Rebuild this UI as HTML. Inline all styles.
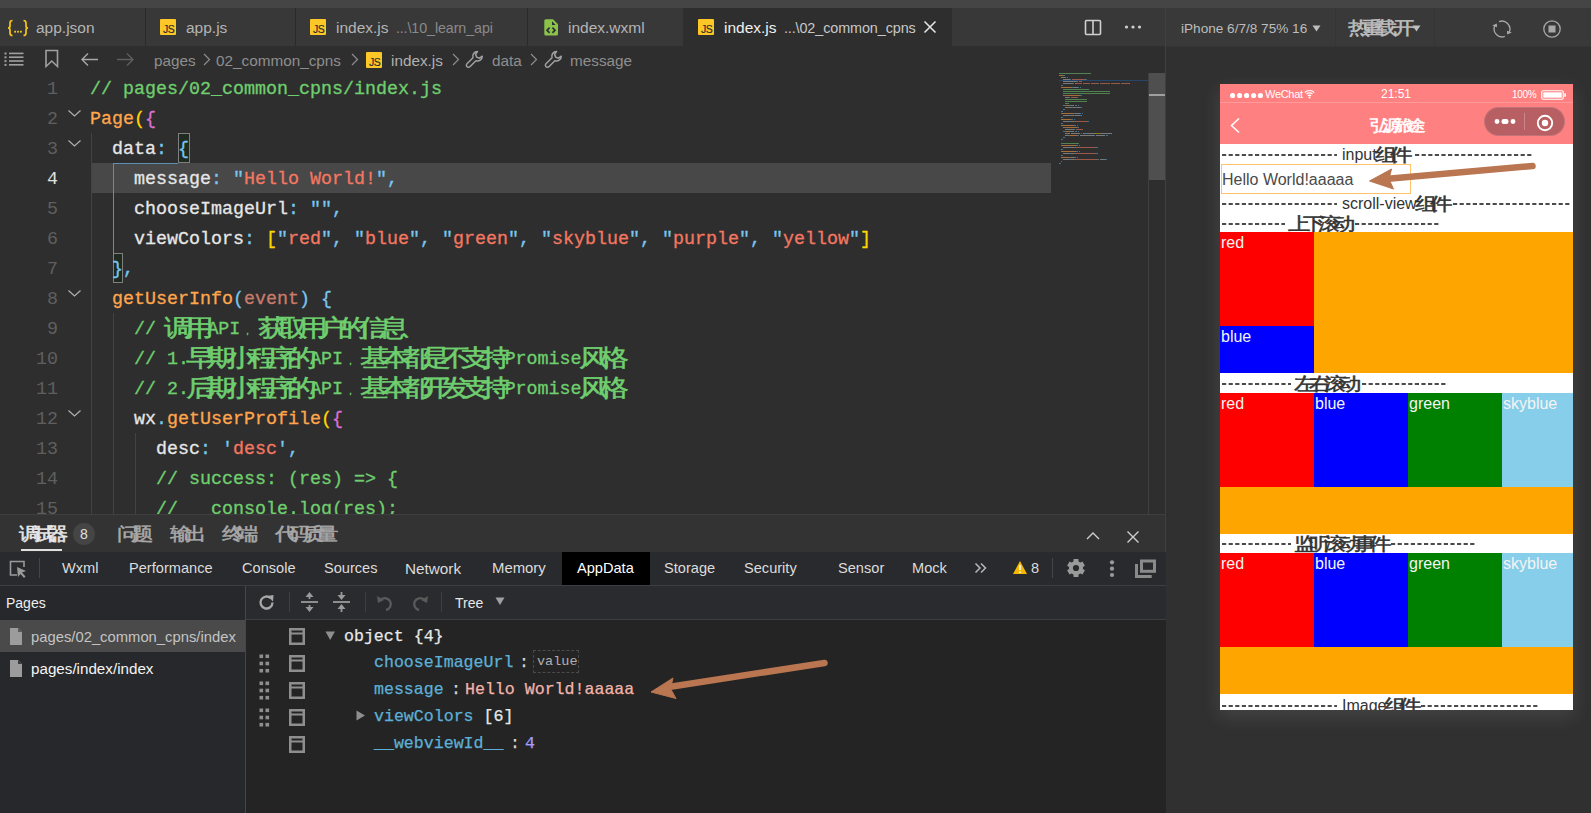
<!DOCTYPE html>
<html><head><meta charset="utf-8">
<style>
*{box-sizing:border-box;margin:0;padding:0}
html,body{width:1591px;height:813px;overflow:hidden;background:#2e2e2e;font-family:"Liberation Sans",sans-serif;}
.a{position:absolute;white-space:pre}
#top{left:0;top:0;width:1591px;height:8px;background:#454545}
#tabs{left:0;top:8px;width:1165px;height:38px;background:#383838}
.sep{position:absolute;width:1px;background:#2a2a2a}
.tab{position:absolute;top:1px;height:38px;font-size:15.5px;color:#b4b4b4;line-height:38px}
.js{position:absolute;width:15.5px;height:15.5px;background:#fdc728;border-radius:1px}
.js:after{content:"JS";position:absolute;right:1.2px;bottom:0.5px;font-size:10.5px;color:#2a2a2a;line-height:10px;letter-spacing:-0.5px;-webkit-text-stroke:0.15px #2a2a2a}
#bc{left:0;top:46px;width:1165px;height:27px;background:#2e2e2e}
.bct{position:absolute;top:1px;font-size:15.3px;color:#8e8e8e;line-height:28px}
#editor{left:0;top:73px;width:1165px;height:441px;background:#2e2e2e;overflow:hidden}
.ln{position:absolute;left:0;padding-top:1.5px;width:58px;text-align:right;font-family:"Liberation Mono",monospace;font-size:18.33px;color:#5f5f5f;line-height:30px}
.cl{position:absolute;left:90px;padding-top:1.5px;-webkit-text-stroke:0.3px;font-family:"Liberation Mono",monospace;font-size:18.33px;line-height:30px;color:#e6e6e6;white-space:pre}
.cm{color:#6fcf6f}.fn{color:#ffa64d}.yb{color:#ffd700}.mg{color:#da70d6}.bl{color:#79c6f0}.st{color:#f47762}.ev{color:#c97b6a}
.guide{position:absolute;width:1px;background:#434343}
.pt{top:515px;height:37px;line-height:37px;font-size:14px;color:#a8a8a8}
.dt{top:552px;height:33px;line-height:33px;font-size:14.6px;color:#dcdcdc}
.tr{font-family:"Liberation Mono",monospace;font-size:16.6px;line-height:26px;padding-top:1.5px;-webkit-text-stroke:0.25px}
.pl{font-size:16px;color:#333;line-height:22px}
.pc{font-size:16px;color:#f4f4f4;line-height:20px;margin-top:-1px}
.k{display:inline-block;font-style:normal;font-family:"Liberation Sans",sans-serif;text-align:center;line-height:0;-webkit-text-stroke:.45px;transform:scaleX(1.25)}
.kc{font-size:9px;text-align:left;-webkit-text-stroke:.3px;transform:none}
.fold{position:absolute;left:68px;width:12px;height:8px}
</style></head>
<body>
<div class="a" id="top"></div>
<div class="a" id="tabs">
  <div class="sep" style="left:145px;top:0;height:38px"></div>
  <div class="sep" style="left:295px;top:0;height:38px"></div>
  <div class="sep" style="left:527px;top:0;height:38px"></div>
  <svg class="a" style="left:7px;top:11px" width="22" height="18" viewBox="0 0 22 18"><g fill="none" stroke="#f5c518" stroke-width="1.7"><path d="M5.5 1.5 Q3 1.5 3 4 V7 Q3 9 1 9 Q3 9 3 11 V14 Q3 16.5 5.5 16.5"/><path d="M16.5 1.5 Q19 1.5 19 4 V7 Q19 9 21 9 Q19 9 19 11 V14 Q19 16.5 16.5 16.5"/></g><g fill="#f5c518"><rect x="7.2" y="11.8" width="1.8" height="1.8"/><rect x="10.1" y="11.8" width="1.8" height="1.8"/><rect x="13" y="11.8" width="1.8" height="1.8"/></g></svg>
  <div class="tab" style="left:36px">app.json</div>
  <div class="js" style="left:160px;top:11px"></div>
  <div class="tab" style="left:186px">app.js</div>
  <div class="js" style="left:310px;top:11px"></div>
  <div class="tab" style="left:336px">index.js <span style="color:#8a8a8a;font-size:14.3px;margin-left:3px;letter-spacing:-0.1px">...\10_learn_api</span></div>
  <div class="tab" style="left:568px">index.wxml</div>
  <div class="tab" style="left:683px;top:0;width:269px;background:#2e2e2e"></div>
  <div class="js" style="left:698px;top:11px"></div>
  <div class="tab" style="left:724px;color:#f0f0f0">index.js <span style="color:#c8c8c8;font-size:14.4px;margin-left:3px;letter-spacing:-0.1px">...\02_common_cpns</span></div>
</div>
<div class="a" id="bc">
  <div class="bct" style="left:154px">pages</div>
  <div class="bct" style="left:216px">02_common_cpns</div>
  <div class="js" style="left:366px;top:6px"></div>
  <div class="bct" style="left:391px;color:#b0b0b0">index.js</div>
  <div class="bct" style="left:492px">data</div>
  <div class="bct" style="left:570px">message</div>
</div>
<div class="a" id="editor">
  <div style="position:absolute;left:91px;top:90px;width:960px;height:30px;background:#484848"></div>

  <div class="guide" style="left:91px;top:60px;height:381px"></div>
  <div class="guide" style="left:113px;top:240px;height:201px"></div>
  <div class="guide" style="left:135px;top:360px;height:81px"></div>
  <div style="position:absolute;left:113px;top:90px;width:1px;height:90px;background:#5d8fb3"></div>
  <div style="position:absolute;left:113px;top:90px;width:65px;height:1px;background:#5d8fb3"></div>
  <div style="position:absolute;left:178px;top:60px;width:12px;height:30px;border:1px solid #808080;background:#1f2b20"></div>
  <div style="position:absolute;left:113px;top:180px;width:10px;height:30px;border:1px solid #808080;background:#1f2b20"></div>
  <svg class="a" style="left:66px;top:30px" width="16" height="330"><g fill="none" stroke="#b0b0b0" stroke-width="1.2">
    <path d="M2.5 7.5 L8.5 13 L14.5 7.5"/><path d="M2.5 37.5 L8.5 43 L14.5 37.5"/><path d="M2.5 187.5 L8.5 193 L14.5 187.5"/><path d="M2.5 307.5 L8.5 313 L14.5 307.5"/></g></svg>
  <div class="ln" style="top:0">1</div>
  <div class="ln" style="top:30px">2</div>
  <div class="ln" style="top:60px">3</div>
  <div class="ln" style="top:90px;color:#e0e0e0">4</div>
  <div class="ln" style="top:120px">5</div>
  <div class="ln" style="top:150px">6</div>
  <div class="ln" style="top:180px">7</div>
  <div class="ln" style="top:210px">8</div>
  <div class="ln" style="top:240px">9</div>
  <div class="ln" style="top:270px">10</div>
  <div class="ln" style="top:300px">11</div>
  <div class="ln" style="top:330px">12</div>
  <div class="ln" style="top:360px">13</div>
  <div class="ln" style="top:390px">14</div>
  <div class="ln" style="top:420px">15</div>
  <div class="cl" style="top:0"><span class="cm">// pages/02_common_cpns/index.js</span></div>
  <div class="cl" style="top:30px"><span class="fn">Page</span><span class="yb">(</span><span class="mg">{</span></div>
  <div class="cl" style="top:60px">  data<span class="bl">:</span> <span class="bl">{</span></div>
  <div class="cl" style="top:90px">    message<span class="bl">:</span> <span class="bl">"</span><span class="st">Hello World!</span><span class="bl">",</span></div>
  <div class="cl" style="top:120px">    chooseImageUrl<span class="bl">:</span> <span class="bl">"",</span></div>
  <div class="cl" style="top:150px">    viewColors<span class="bl">:</span> <span class="yb">[</span><span class="bl">"</span><span class="st">red</span><span class="bl">", "</span><span class="st">blue</span><span class="bl">", "</span><span class="st">green</span><span class="bl">", "</span><span class="st">skyblue</span><span class="bl">", "</span><span class="st">purple</span><span class="bl">", "</span><span class="st">yellow</span><span class="bl">"</span><span class="yb">]</span></div>
  <div class="cl" style="top:180px">  <span class="bl">},</span></div>
  <div class="cl" style="top:210px">  <span class="fn">getUserInfo</span><span class="bl">(</span><span class="ev">event</span><span class="bl">) {</span></div>
  <div class="cl" style="top:240px"><span class="cm">    // <i class="k" style="width:20.2px;font-size:24px;position:relative;top:2.5px">调</i><i class="k" style="width:20.2px;font-size:24px;position:relative;top:2.5px">用</i>API<i class="k kc" style="width:20.2px;padding-left:3px">，</i><i class="k" style="width:20.2px;font-size:24px;position:relative;top:2.5px">获</i><i class="k" style="width:20.2px;font-size:24px;position:relative;top:2.5px">取</i><i class="k" style="width:20.2px;font-size:24px;position:relative;top:2.5px">用</i><i class="k" style="width:20.2px;font-size:24px;position:relative;top:2.5px">户</i><i class="k" style="width:20.2px;font-size:24px;position:relative;top:2.5px">的</i><i class="k" style="width:20.2px;font-size:24px;position:relative;top:2.5px">信</i><i class="k" style="width:20.2px;font-size:24px;position:relative;top:2.5px">息</i></span></div>
  <div class="cl" style="top:270px"><span class="cm">    // 1.<i class="k" style="width:20.2px;font-size:24px;position:relative;top:2.5px">早</i><i class="k" style="width:20.2px;font-size:24px;position:relative;top:2.5px">期</i><i class="k" style="width:20.2px;font-size:24px;position:relative;top:2.5px">小</i><i class="k" style="width:20.2px;font-size:24px;position:relative;top:2.5px">程</i><i class="k" style="width:20.2px;font-size:24px;position:relative;top:2.5px">序</i><i class="k" style="width:20.2px;font-size:24px;position:relative;top:2.5px">的</i>API<i class="k kc" style="width:20.2px;padding-left:3px">，</i><i class="k" style="width:20.2px;font-size:24px;position:relative;top:2.5px">基</i><i class="k" style="width:20.2px;font-size:24px;position:relative;top:2.5px">本</i><i class="k" style="width:20.2px;font-size:24px;position:relative;top:2.5px">都</i><i class="k" style="width:20.2px;font-size:24px;position:relative;top:2.5px">是</i><i class="k" style="width:20.2px;font-size:24px;position:relative;top:2.5px">不</i><i class="k" style="width:20.2px;font-size:24px;position:relative;top:2.5px">支</i><i class="k" style="width:20.2px;font-size:24px;position:relative;top:2.5px">持</i>Promise<i class="k" style="width:20.2px;font-size:24px;position:relative;top:2.5px">风</i><i class="k" style="width:20.2px;font-size:24px;position:relative;top:2.5px">格</i></span></div>
  <div class="cl" style="top:300px"><span class="cm">    // 2.<i class="k" style="width:20.2px;font-size:24px;position:relative;top:2.5px">后</i><i class="k" style="width:20.2px;font-size:24px;position:relative;top:2.5px">期</i><i class="k" style="width:20.2px;font-size:24px;position:relative;top:2.5px">小</i><i class="k" style="width:20.2px;font-size:24px;position:relative;top:2.5px">程</i><i class="k" style="width:20.2px;font-size:24px;position:relative;top:2.5px">序</i><i class="k" style="width:20.2px;font-size:24px;position:relative;top:2.5px">的</i>API<i class="k kc" style="width:20.2px;padding-left:3px">，</i><i class="k" style="width:20.2px;font-size:24px;position:relative;top:2.5px">基</i><i class="k" style="width:20.2px;font-size:24px;position:relative;top:2.5px">本</i><i class="k" style="width:20.2px;font-size:24px;position:relative;top:2.5px">都</i><i class="k" style="width:20.2px;font-size:24px;position:relative;top:2.5px">开</i><i class="k" style="width:20.2px;font-size:24px;position:relative;top:2.5px">发</i><i class="k" style="width:20.2px;font-size:24px;position:relative;top:2.5px">支</i><i class="k" style="width:20.2px;font-size:24px;position:relative;top:2.5px">持</i>Promise<i class="k" style="width:20.2px;font-size:24px;position:relative;top:2.5px">风</i><i class="k" style="width:20.2px;font-size:24px;position:relative;top:2.5px">格</i></span></div>
  <div class="cl" style="top:330px">    wx<span class="bl">.</span><span class="fn">getUserProfile</span><span class="yb">(</span><span class="mg">{</span></div>
  <div class="cl" style="top:360px">      desc<span class="bl">:</span> <span class="bl">'</span><span class="st">desc</span><span class="bl">',</span></div>
  <div class="cl" style="top:390px"><span class="cm">      // success: (res) =&gt; {</span></div>
  <div class="cl" style="top:420px"><span class="cm">      //   console.log(res);</span></div>
</div>

<div class="a" style="left:1059px;top:79.5px;width:89px;height:1.5px;background:#25456a"></div>
<svg class="a" style="left:1059px;top:73.3px;opacity:.7" width="90" height="100" shape-rendering="crispEdges"><rect x="0" y="0" width="32" height="1.3" fill="#5fa85f"/><rect x="0" y="2" width="4" height="1.3" fill="#d98a40"/><rect x="4" y="2" width="1" height="1.3" fill="#4f8fb8"/><rect x="5" y="2" width="1" height="1.3" fill="#4f8fb8"/><rect x="2" y="4" width="4" height="1.3" fill="#9a9a9a"/><rect x="6" y="4" width="1" height="1.3" fill="#4f8fb8"/><rect x="8" y="4" width="1" height="1.3" fill="#4f8fb8"/><rect x="4" y="6" width="7" height="1.3" fill="#9a9a9a"/><rect x="11" y="6" width="1" height="1.3" fill="#4f8fb8"/><rect x="13" y="6" width="14" height="1.3" fill="#c96a55"/><rect x="27" y="6" width="1" height="1.3" fill="#4f8fb8"/><rect x="4" y="8" width="14" height="1.3" fill="#9a9a9a"/><rect x="18" y="8" width="1" height="1.3" fill="#4f8fb8"/><rect x="20" y="8" width="2" height="1.3" fill="#c96a55"/><rect x="22" y="8" width="1" height="1.3" fill="#4f8fb8"/><rect x="4" y="10" width="10" height="1.3" fill="#9a9a9a"/><rect x="14" y="10" width="1" height="1.3" fill="#4f8fb8"/><rect x="16" y="10" width="1" height="1.3" fill="#c8a800"/><rect x="17" y="10" width="5" height="1.3" fill="#c96a55"/><rect x="22" y="10" width="1" height="1.3" fill="#4f8fb8"/><rect x="24" y="10" width="6" height="1.3" fill="#c96a55"/><rect x="30" y="10" width="1" height="1.3" fill="#4f8fb8"/><rect x="32" y="10" width="7" height="1.3" fill="#c96a55"/><rect x="39" y="10" width="1" height="1.3" fill="#4f8fb8"/><rect x="41" y="10" width="9" height="1.3" fill="#c96a55"/><rect x="50" y="10" width="1" height="1.3" fill="#4f8fb8"/><rect x="52" y="10" width="8" height="1.3" fill="#c96a55"/><rect x="60" y="10" width="1" height="1.3" fill="#4f8fb8"/><rect x="62" y="10" width="8" height="1.3" fill="#c96a55"/><rect x="70" y="10" width="1" height="1.3" fill="#c8a800"/><rect x="2" y="12" width="1" height="1.3" fill="#4f8fb8"/><rect x="3" y="12" width="1" height="1.3" fill="#4f8fb8"/><rect x="2" y="14" width="11" height="1.3" fill="#d98a40"/><rect x="13" y="14" width="1" height="1.3" fill="#4f8fb8"/><rect x="14" y="14" width="5" height="1.3" fill="#9a9a9a"/><rect x="19" y="14" width="1" height="1.3" fill="#4f8fb8"/><rect x="21" y="14" width="1" height="1.3" fill="#4f8fb8"/><rect x="4" y="16" width="26" height="1.3" fill="#5fa85f"/><rect x="4" y="18" width="47" height="1.3" fill="#5fa85f"/><rect x="4" y="20" width="47" height="1.3" fill="#5fa85f"/><rect x="4" y="22" width="2" height="1.3" fill="#9a9a9a"/><rect x="6" y="22" width="1" height="1.3" fill="#4f8fb8"/><rect x="7" y="22" width="14" height="1.3" fill="#d98a40"/><rect x="21" y="22" width="1" height="1.3" fill="#4f8fb8"/><rect x="22" y="22" width="1" height="1.3" fill="#4f8fb8"/><rect x="6" y="24" width="4" height="1.3" fill="#9a9a9a"/><rect x="10" y="24" width="1" height="1.3" fill="#4f8fb8"/><rect x="12" y="24" width="6" height="1.3" fill="#c96a55"/><rect x="18" y="24" width="1" height="1.3" fill="#4f8fb8"/><rect x="6" y="26" width="22" height="1.3" fill="#5fa85f"/><rect x="6" y="28" width="22" height="1.3" fill="#5fa85f"/><rect x="6" y="30" width="4" height="1.3" fill="#5fa85f"/><rect x="4" y="32" width="1" height="1.3" fill="#4f8fb8"/><rect x="5" y="32" width="1" height="1.3" fill="#4f8fb8"/><rect x="6" y="32" width="1" height="1.3" fill="#4f8fb8"/><rect x="7" y="32" width="4" height="1.3" fill="#d98a40"/><rect x="11" y="32" width="1" height="1.3" fill="#4f8fb8"/><rect x="12" y="32" width="3" height="1.3" fill="#9a9a9a"/><rect x="16" y="32" width="1" height="1.3" fill="#4f8fb8"/><rect x="17" y="32" width="1" height="1.3" fill="#4f8fb8"/><rect x="19" y="32" width="1" height="1.3" fill="#4f8fb8"/><rect x="6" y="34" width="7" height="1.3" fill="#9a9a9a"/><rect x="13" y="34" width="1" height="1.3" fill="#4f8fb8"/><rect x="14" y="34" width="3" height="1.3" fill="#d98a40"/><rect x="17" y="34" width="1" height="1.3" fill="#4f8fb8"/><rect x="18" y="34" width="3" height="1.3" fill="#9a9a9a"/><rect x="21" y="34" width="1" height="1.3" fill="#4f8fb8"/><rect x="22" y="34" width="1" height="1.3" fill="#4f8fb8"/><rect x="4" y="36" width="1" height="1.3" fill="#4f8fb8"/><rect x="5" y="36" width="1" height="1.3" fill="#4f8fb8"/><rect x="2" y="38" width="1" height="1.3" fill="#4f8fb8"/><rect x="3" y="38" width="1" height="1.3" fill="#4f8fb8"/><rect x="2" y="40" width="13" height="1.3" fill="#d98a40"/><rect x="15" y="40" width="1" height="1.3" fill="#4f8fb8"/><rect x="16" y="40" width="5" height="1.3" fill="#9a9a9a"/><rect x="21" y="40" width="1" height="1.3" fill="#4f8fb8"/><rect x="23" y="40" width="1" height="1.3" fill="#4f8fb8"/><rect x="4" y="42" width="7" height="1.3" fill="#9a9a9a"/><rect x="11" y="42" width="1" height="1.3" fill="#4f8fb8"/><rect x="12" y="42" width="3" height="1.3" fill="#d98a40"/><rect x="15" y="42" width="1" height="1.3" fill="#4f8fb8"/><rect x="16" y="42" width="5" height="1.3" fill="#9a9a9a"/><rect x="21" y="42" width="1" height="1.3" fill="#4f8fb8"/><rect x="22" y="42" width="1" height="1.3" fill="#4f8fb8"/><rect x="2" y="44" width="1" height="1.3" fill="#4f8fb8"/><rect x="3" y="44" width="1" height="1.3" fill="#4f8fb8"/><rect x="2" y="46" width="10" height="1.3" fill="#d98a40"/><rect x="12" y="46" width="1" height="1.3" fill="#4f8fb8"/><rect x="13" y="46" width="1" height="1.3" fill="#4f8fb8"/><rect x="15" y="46" width="1" height="1.3" fill="#4f8fb8"/><rect x="4" y="48" width="7" height="1.3" fill="#9a9a9a"/><rect x="11" y="48" width="1" height="1.3" fill="#4f8fb8"/><rect x="12" y="48" width="3" height="1.3" fill="#d98a40"/><rect x="15" y="48" width="1" height="1.3" fill="#4f8fb8"/><rect x="16" y="48" width="12" height="1.3" fill="#c96a55"/><rect x="28" y="48" width="1" height="1.3" fill="#4f8fb8"/><rect x="29" y="48" width="1" height="1.3" fill="#4f8fb8"/><rect x="2" y="50" width="1" height="1.3" fill="#4f8fb8"/><rect x="3" y="50" width="1" height="1.3" fill="#4f8fb8"/><rect x="2" y="52" width="13" height="1.3" fill="#d98a40"/><rect x="15" y="52" width="1" height="1.3" fill="#4f8fb8"/><rect x="16" y="52" width="1" height="1.3" fill="#4f8fb8"/><rect x="18" y="52" width="1" height="1.3" fill="#4f8fb8"/><rect x="4" y="54" width="2" height="1.3" fill="#9a9a9a"/><rect x="6" y="54" width="1" height="1.3" fill="#4f8fb8"/><rect x="7" y="54" width="11" height="1.3" fill="#d98a40"/><rect x="18" y="54" width="1" height="1.3" fill="#4f8fb8"/><rect x="19" y="54" width="1" height="1.3" fill="#4f8fb8"/><rect x="6" y="56" width="9" height="1.3" fill="#9a9a9a"/><rect x="15" y="56" width="1" height="1.3" fill="#4f8fb8"/><rect x="17" y="56" width="7" height="1.3" fill="#c96a55"/><rect x="4" y="58" width="1" height="1.3" fill="#4f8fb8"/><rect x="5" y="58" width="1" height="1.3" fill="#4f8fb8"/><rect x="6" y="58" width="1" height="1.3" fill="#4f8fb8"/><rect x="7" y="58" width="4" height="1.3" fill="#d98a40"/><rect x="11" y="58" width="1" height="1.3" fill="#4f8fb8"/><rect x="12" y="58" width="3" height="1.3" fill="#9a9a9a"/><rect x="16" y="58" width="1" height="1.3" fill="#4f8fb8"/><rect x="17" y="58" width="1" height="1.3" fill="#4f8fb8"/><rect x="19" y="58" width="1" height="1.3" fill="#4f8fb8"/><rect x="6" y="60" width="5" height="1.3" fill="#9a9a9a"/><rect x="12" y="60" width="9" height="1.3" fill="#9a9a9a"/><rect x="22" y="60" width="1" height="1.3" fill="#4f8fb8"/><rect x="24" y="60" width="3" height="1.3" fill="#9a9a9a"/><rect x="27" y="60" width="1" height="1.3" fill="#4f8fb8"/><rect x="28" y="60" width="9" height="1.3" fill="#9a9a9a"/><rect x="37" y="60" width="1" height="1.3" fill="#c8a800"/><rect x="38" y="60" width="1" height="1.3" fill="#4f8fb8"/><rect x="39" y="60" width="1" height="1.3" fill="#c8a800"/><rect x="40" y="60" width="1" height="1.3" fill="#4f8fb8"/><rect x="41" y="60" width="12" height="1.3" fill="#9a9a9a"/><rect x="6" y="62" width="4" height="1.3" fill="#9a9a9a"/><rect x="10" y="62" width="1" height="1.3" fill="#4f8fb8"/><rect x="11" y="62" width="7" height="1.3" fill="#d98a40"/><rect x="18" y="62" width="1" height="1.3" fill="#4f8fb8"/><rect x="19" y="62" width="1" height="1.3" fill="#4f8fb8"/><rect x="21" y="62" width="14" height="1.3" fill="#9a9a9a"/><rect x="35" y="62" width="1" height="1.3" fill="#4f8fb8"/><rect x="37" y="62" width="9" height="1.3" fill="#9a9a9a"/><rect x="47" y="62" width="1" height="1.3" fill="#4f8fb8"/><rect x="48" y="62" width="1" height="1.3" fill="#4f8fb8"/><rect x="4" y="64" width="1" height="1.3" fill="#4f8fb8"/><rect x="5" y="64" width="1" height="1.3" fill="#4f8fb8"/><rect x="2" y="66" width="1" height="1.3" fill="#4f8fb8"/><rect x="3" y="66" width="1" height="1.3" fill="#4f8fb8"/><rect x="2" y="70" width="18" height="1.3" fill="#5fa85f"/><rect x="2" y="72" width="15" height="1.3" fill="#d98a40"/><rect x="17" y="72" width="1" height="1.3" fill="#4f8fb8"/><rect x="18" y="72" width="1" height="1.3" fill="#4f8fb8"/><rect x="20" y="72" width="1" height="1.3" fill="#4f8fb8"/><rect x="4" y="74" width="7" height="1.3" fill="#9a9a9a"/><rect x="11" y="74" width="1" height="1.3" fill="#4f8fb8"/><rect x="12" y="74" width="3" height="1.3" fill="#d98a40"/><rect x="15" y="74" width="1" height="1.3" fill="#4f8fb8"/><rect x="16" y="74" width="21" height="1.3" fill="#c96a55"/><rect x="37" y="74" width="1" height="1.3" fill="#4f8fb8"/><rect x="38" y="74" width="1" height="1.3" fill="#4f8fb8"/><rect x="2" y="76" width="1" height="1.3" fill="#4f8fb8"/><rect x="3" y="76" width="1" height="1.3" fill="#4f8fb8"/><rect x="2" y="78" width="15" height="1.3" fill="#d98a40"/><rect x="17" y="78" width="1" height="1.3" fill="#4f8fb8"/><rect x="18" y="78" width="1" height="1.3" fill="#4f8fb8"/><rect x="20" y="78" width="1" height="1.3" fill="#4f8fb8"/><rect x="4" y="80" width="7" height="1.3" fill="#9a9a9a"/><rect x="11" y="80" width="1" height="1.3" fill="#4f8fb8"/><rect x="12" y="80" width="3" height="1.3" fill="#d98a40"/><rect x="15" y="80" width="1" height="1.3" fill="#4f8fb8"/><rect x="16" y="80" width="21" height="1.3" fill="#c96a55"/><rect x="37" y="80" width="1" height="1.3" fill="#4f8fb8"/><rect x="38" y="80" width="1" height="1.3" fill="#4f8fb8"/><rect x="2" y="82" width="1" height="1.3" fill="#4f8fb8"/><rect x="3" y="82" width="1" height="1.3" fill="#4f8fb8"/><rect x="2" y="84" width="8" height="1.3" fill="#d98a40"/><rect x="10" y="84" width="1" height="1.3" fill="#4f8fb8"/><rect x="11" y="84" width="5" height="1.3" fill="#9a9a9a"/><rect x="16" y="84" width="1" height="1.3" fill="#4f8fb8"/><rect x="18" y="84" width="1" height="1.3" fill="#4f8fb8"/><rect x="4" y="86" width="7" height="1.3" fill="#9a9a9a"/><rect x="11" y="86" width="1" height="1.3" fill="#4f8fb8"/><rect x="12" y="86" width="3" height="1.3" fill="#d98a40"/><rect x="15" y="86" width="1" height="1.3" fill="#4f8fb8"/><rect x="16" y="86" width="23" height="1.3" fill="#c96a55"/><rect x="39" y="86" width="1" height="1.3" fill="#4f8fb8"/><rect x="41" y="86" width="5" height="1.3" fill="#9a9a9a"/><rect x="46" y="86" width="1" height="1.3" fill="#4f8fb8"/><rect x="47" y="86" width="1" height="1.3" fill="#4f8fb8"/><rect x="2" y="88" width="1" height="1.3" fill="#4f8fb8"/><rect x="0" y="90" width="1" height="1.3" fill="#4f8fb8"/><rect x="1" y="90" width="1" height="1.3" fill="#4f8fb8"/></svg>
<div class="a" style="left:1148px;top:73px;width:1px;height:441px;background:#404040"></div>
<div class="a" style="left:1149px;top:73px;width:16px;height:107px;background:#4f4f4f"></div>
<div class="a" style="left:1149px;top:94px;width:16px;height:2px;background:#a0a0a0"></div>
<div class="a" style="left:0;top:514px;width:1165px;height:1px;background:#3f3f3f"></div>
<!-- panel tab bar -->
<div class="a" style="left:0;top:515px;width:1165px;height:37px;background:#333333"></div>
<div class="a pt" style="left:21px;color:#e8e8e8"><i class="k" style="width:13.7px;font-size:17.5px;position:relative;top:1.5px">调</i><i class="k" style="width:13.7px;font-size:17.5px;position:relative;top:1.5px">试</i><i class="k" style="width:13.7px;font-size:17.5px;position:relative;top:1.5px">器</i></div>
<div class="a" style="left:73px;top:523px;width:22px;height:22px;border-radius:11px;background:#454545;color:#e0e0e0;font-size:14px;line-height:22px;text-align:center">8</div>
<div class="a" style="left:21px;top:549px;width:41px;height:2px;background:#e0e0e0"></div>
<div class="a pt" style="left:119px"><i class="k" style="width:13.7px;font-size:17.5px;position:relative;top:1.5px">问</i><i class="k" style="width:13.7px;font-size:17.5px;position:relative;top:1.5px">题</i></div>
<div class="a pt" style="left:172px"><i class="k" style="width:13.7px;font-size:17.5px;position:relative;top:1.5px">输</i><i class="k" style="width:13.7px;font-size:17.5px;position:relative;top:1.5px">出</i></div>
<div class="a pt" style="left:224px"><i class="k" style="width:13.7px;font-size:17.5px;position:relative;top:1.5px">终</i><i class="k" style="width:13.7px;font-size:17.5px;position:relative;top:1.5px">端</i></div>
<div class="a pt" style="left:277px"><i class="k" style="width:13.7px;font-size:17.5px;position:relative;top:1.5px">代</i><i class="k" style="width:13.7px;font-size:17.5px;position:relative;top:1.5px">码</i><i class="k" style="width:13.7px;font-size:17.5px;position:relative;top:1.5px">质</i><i class="k" style="width:13.7px;font-size:17.5px;position:relative;top:1.5px">量</i></div>
<svg class="a" style="left:1085px;top:530px" width="16" height="12"><path d="M2 9 L8 3 L14 9" fill="none" stroke="#cfcfcf" stroke-width="1.4"/></svg>
<svg class="a" style="left:1126px;top:530px" width="14" height="14"><path d="M1.5 1.5 L12.5 12.5 M12.5 1.5 L1.5 12.5" fill="none" stroke="#cfcfcf" stroke-width="1.4"/></svg>
<!-- devtools tabs -->
<div class="a" style="left:0;top:552px;width:1166px;height:34px;background:#292a2d"></div>
<div class="a" style="left:0;top:585px;width:1166px;height:1px;background:#3d3e41"></div>
<div class="a" style="left:562px;top:552px;width:88px;height:33px;background:#000"></div>
<svg class="a" style="left:8px;top:559px" width="20" height="20"><path d="M9 16 H2.5 V2.5 H16 V8" fill="none" stroke="#9a9a9a" stroke-width="1.6"/><path d="M9 8 L18 12 L14 13.5 L17.5 17.5 L16 19 L12.5 15 L10 18 Z" fill="#9a9a9a"/></svg>
<div class="a" style="left:39px;top:558px;width:1px;height:20px;background:#44454a"></div>
<div class="a dt" style="left:62px">Wxml</div>
<div class="a dt" style="left:129px">Performance</div>
<div class="a dt" style="left:242px">Console</div>
<div class="a dt" style="left:324px">Sources</div>
<div class="a dt" style="left:405px;font-size:15.3px">Network</div>
<div class="a dt" style="left:492px;font-size:14.9px">Memory</div>
<div class="a dt" style="left:577px;color:#fff">AppData</div>
<div class="a dt" style="left:664px">Storage</div>
<div class="a dt" style="left:744px">Security</div>
<div class="a dt" style="left:838px">Sensor</div>
<div class="a dt" style="left:912px">Mock</div>
<svg class="a" style="left:974px;top:562px" width="14" height="12"><path d="M1.5 1.5 L6 6 L1.5 10.5 M7 1.5 L11.5 6 L7 10.5" fill="none" stroke="#b8b8b8" stroke-width="1.5"/></svg>
<svg class="a" style="left:1012px;top:560px" width="16" height="15"><path d="M8 1 L15 14 H1 Z" fill="#f5b800"/><path d="M8 5 V10 M8 11.5 V13" stroke="#fff" stroke-width="1.6"/></svg>
<div class="a dt" style="left:1031px">8</div>
<div class="a" style="left:1052px;top:558px;width:1px;height:20px;background:#44454a"></div>
<svg class="a" style="left:1066.4px;top:558px" width="20" height="20" viewBox="0 0 20 20"><path fill="#9a9a9a" fill-rule="evenodd" d="M7.58 1.12 L12.42 1.12 L12.58 3.49 L14.34 4.51 L16.48 3.47 L18.90 7.66 L16.93 8.98 L16.93 11.02 L18.90 12.34 L16.48 16.53 L14.34 15.49 L12.58 16.51 L12.42 18.88 L7.58 18.88 L7.42 16.51 L5.66 15.49 L3.52 16.53 L1.10 12.34 L3.07 11.02 L3.07 8.98 L1.10 7.66 L3.52 3.47 L5.66 4.51 L7.42 3.49 Z M10 6.9 A3.1 3.1 0 1 0 10 13.1 A3.1 3.1 0 1 0 10 6.9 Z"/></svg>
<svg class="a" style="left:1108px;top:558px" width="8" height="20"><circle cx="4" cy="4.3" r="2.1" fill="#9a9a9a"/><circle cx="4" cy="10.7" r="2.1" fill="#9a9a9a"/><circle cx="4" cy="17" r="2.1" fill="#9a9a9a"/></svg>
<svg class="a" style="left:1134px;top:558px" width="24" height="21"><path d="M2.5 6 V18.5 H17.7" fill="none" stroke="#8a8a8a" stroke-width="3"/><rect x="7.5" y="3" width="13" height="10.3" fill="none" stroke="#8a8a8a" stroke-width="3"/></svg>
<!-- sidebar -->
<div class="a" style="left:0;top:586px;width:245px;height:227px;background:#27282b"></div>
<div class="a" style="left:245px;top:586px;width:1px;height:227px;background:#45464a"></div>
<div class="a" style="left:246px;top:586px;width:920px;height:227px;background:#242424"></div>
<div class="a" style="left:6px;top:593px;font-size:14px;color:#f0f0f0;line-height:20px">Pages</div>
<div class="a" style="left:0;top:620px;width:245px;height:32px;background:#4a4a4a"></div>
<svg class="a" style="left:9px;top:627px" width="14" height="19"><path d="M1 1 H9 L13 5 V18 H1 Z" fill="#9c9c9c"/><path d="M9 1 V5 H13" fill="#5a5a5a"/></svg>
<div class="a" style="left:31px;top:626px;font-size:14.8px;color:#c4c4c4;line-height:22px">pages/02_common_cpns/index</div>
<svg class="a" style="left:9px;top:659px" width="14" height="19"><path d="M1 1 H9 L13 5 V18 H1 Z" fill="#9c9c9c"/><path d="M9 1 V5 H13" fill="#3a3a3a"/></svg>
<div class="a" style="left:31px;top:658px;font-size:15.2px;color:#f4f4f4;line-height:22px">pages/index/index</div>
<!-- data toolbar -->
<div class="a" style="left:246px;top:586px;width:920px;height:33px;background:#2a2b2e"></div>
<div class="a" style="left:246px;top:619px;width:920px;height:1px;background:#3d3e41"></div>

<!-- data toolbar icons -->
<svg class="a" style="left:257px;top:593px" width="19" height="19" viewBox="0 0 19 19"><path d="M15.5 9.5 A6 6 0 1 1 13.7 5.2" fill="none" stroke="#a8a8a8" stroke-width="2.3"/><path d="M10.5 3 L16.5 2 L16 8.5 Z" fill="#a8a8a8"/></svg>
<div class="a" style="left:289px;top:592px;width:1px;height:20px;background:#3d3e41"></div>
<svg class="a" style="left:300px;top:591px" width="19" height="22" viewBox="0 0 19 22"><path d="M1 11 H18" stroke="#9a9a9a" stroke-width="1.8"/><path d="M9.5 1 L13.5 6 H5.5 Z M9.5 21 L13.5 16 H5.5 Z" fill="#9a9a9a"/><path d="M9.5 5 V8 M9.5 14 V17" stroke="#9a9a9a" stroke-width="1.8"/></svg>
<svg class="a" style="left:332px;top:591px" width="19" height="22" viewBox="0 0 19 22"><path d="M1 11 H18" stroke="#9a9a9a" stroke-width="1.8"/><path d="M9.5 9 L13.5 4 H5.5 Z M9.5 13 L13.5 18 H5.5 Z" fill="#9a9a9a"/><path d="M9.5 1 V5 M9.5 17 V21" stroke="#9a9a9a" stroke-width="1.8"/></svg>
<div class="a" style="left:365px;top:592px;width:1px;height:20px;background:#3d3e41"></div>
<svg class="a" style="left:376px;top:593px" width="20" height="19" viewBox="0 0 20 19"><path d="M5 6.5 A6 6 0 1 1 10 17" fill="none" stroke="#5a5a5a" stroke-width="2.3"/><path d="M1 3 L2 10 L8 7 Z" fill="#5a5a5a"/></svg>
<svg class="a" style="left:409px;top:593px" width="20" height="19" viewBox="0 0 20 19"><path d="M15 6.5 A6 6 0 1 0 10 17" fill="none" stroke="#5a5a5a" stroke-width="2.3"/><path d="M19 3 L18 10 L12 7 Z" fill="#5a5a5a"/></svg>
<div class="a" style="left:441px;top:592px;width:1px;height:20px;background:#3d3e41"></div>
<div class="a" style="left:455px;top:593px;font-size:14px;color:#e8e8e8;line-height:20px">Tree</div>
<svg class="a" style="left:495px;top:597px" width="10" height="9"><path d="M0.5 0.5 H9.5 L5 8 Z" fill="#a0a0a0"/></svg>
<!-- tree rows -->
<svg class="a" style="left:289px;top:628px" width="16" height="17"><rect x="1.25" y="1.25" width="13.5" height="14.5" fill="none" stroke="#8e8e8e" stroke-width="2.5"/><path d="M1 5.5 H15" stroke="#8e8e8e" stroke-width="2"/></svg>
<svg class="a" style="left:289px;top:655px" width="16" height="17"><rect x="1.25" y="1.25" width="13.5" height="14.5" fill="none" stroke="#8e8e8e" stroke-width="2.5"/><path d="M1 5.5 H15" stroke="#8e8e8e" stroke-width="2"/></svg>
<svg class="a" style="left:258.7px;top:654px" width="11" height="19"><g fill="#8e8e8e"><rect x="0.5" y="0.5" width="3.6" height="3.6"/><rect x="6.5" y="0.5" width="3.6" height="3.6"/><rect x="0.5" y="7.7" width="3.6" height="3.6"/><rect x="6.5" y="7.7" width="3.6" height="3.6"/><rect x="0.5" y="14.9" width="3.6" height="3.6"/><rect x="6.5" y="14.9" width="3.6" height="3.6"/></g></svg>
<svg class="a" style="left:289px;top:682px" width="16" height="17"><rect x="1.25" y="1.25" width="13.5" height="14.5" fill="none" stroke="#8e8e8e" stroke-width="2.5"/><path d="M1 5.5 H15" stroke="#8e8e8e" stroke-width="2"/></svg>
<svg class="a" style="left:258.7px;top:681px" width="11" height="19"><g fill="#8e8e8e"><rect x="0.5" y="0.5" width="3.6" height="3.6"/><rect x="6.5" y="0.5" width="3.6" height="3.6"/><rect x="0.5" y="7.7" width="3.6" height="3.6"/><rect x="6.5" y="7.7" width="3.6" height="3.6"/><rect x="0.5" y="14.9" width="3.6" height="3.6"/><rect x="6.5" y="14.9" width="3.6" height="3.6"/></g></svg>
<svg class="a" style="left:289px;top:709px" width="16" height="17"><rect x="1.25" y="1.25" width="13.5" height="14.5" fill="none" stroke="#8e8e8e" stroke-width="2.5"/><path d="M1 5.5 H15" stroke="#8e8e8e" stroke-width="2"/></svg>
<svg class="a" style="left:258.7px;top:708px" width="11" height="19"><g fill="#8e8e8e"><rect x="0.5" y="0.5" width="3.6" height="3.6"/><rect x="6.5" y="0.5" width="3.6" height="3.6"/><rect x="0.5" y="7.7" width="3.6" height="3.6"/><rect x="6.5" y="7.7" width="3.6" height="3.6"/><rect x="0.5" y="14.9" width="3.6" height="3.6"/><rect x="6.5" y="14.9" width="3.6" height="3.6"/></g></svg>
<svg class="a" style="left:289px;top:736px" width="16" height="17"><rect x="1.25" y="1.25" width="13.5" height="14.5" fill="none" stroke="#8e8e8e" stroke-width="2.5"/><path d="M1 5.5 H15" stroke="#8e8e8e" stroke-width="2"/></svg>

<svg class="a" style="left:325px;top:631px" width="11" height="10"><path d="M0.5 0.5 H10 L5.2 9 Z" fill="#8e8e8e"/></svg>
<div class="a tr" style="left:344px;top:622px;color:#e8e8e8">object {4}</div>
<div class="a tr" style="left:374px;top:648px;color:#5db0d7">chooseImageUrl</div>
<div class="a tr" style="left:519px;top:648px;color:#d8d8d8">:</div>
<div class="a" style="left:533px;top:650px;width:46px;height:23px;border:1px dashed #4a4a4a;font-family:'Liberation Mono',monospace;font-size:13.5px;color:#b0b0b0;line-height:22px;padding-left:3px">value</div>
<div class="a tr" style="left:374px;top:675px;color:#5db0d7">message</div>
<div class="a tr" style="left:451px;top:675px;color:#d8d8d8">:</div>
<div class="a tr" style="left:465px;top:675px;color:#f2b4aa">Hello World!aaaaa</div>
<svg class="a" style="left:356px;top:710px" width="10" height="11"><path d="M0.5 0.5 V10.5 L9 5.5 Z" fill="#8e8e8e"/></svg>
<div class="a tr" style="left:374px;top:702px;color:#5db0d7">viewColors <span style="color:#e8e8e8">[6]</span></div>
<div class="a tr" style="left:374px;top:729px;color:#5db0d7">__webviewId__</div>
<div class="a tr" style="left:510px;top:729px;color:#d8d8d8">:</div>
<div class="a tr" style="left:525px;top:729px;color:#a59cf8">4</div>

<!-- simulator -->
<div class="a" style="left:1165px;top:8px;width:1px;height:544px;background:#404040"></div>
<div class="a" style="left:1166px;top:8px;width:425px;height:805px;background:#303030"></div>
<div class="a" style="left:1166px;top:8px;width:425px;height:38px;background:#393939"></div>
<div class="a" style="left:1166px;top:46px;width:425px;height:1px;background:#343434"></div>
<div class="a" style="left:1335px;top:8px;width:1px;height:38px;background:#353535"></div>
<div class="a" style="left:1434px;top:8px;width:1px;height:38px;background:#353535"></div>
<div class="a" style="left:1181px;top:18.5px;font-size:13.6px;color:#bdbdbd;line-height:20px">iPhone 6/7/8 75% 16</div>
<svg class="a" style="left:1312px;top:25px" width="9" height="7"><path d="M0.5 0.5 H8.5 L4.5 6.5 Z" fill="#bdbdbd"/></svg>
<div class="a" style="left:1350px;top:18.5px;font-size:13.6px;color:#bdbdbd;line-height:20px"><i class="k" style="width:13.4px;font-size:17.8px;position:relative;top:1.5px">热</i><i class="k" style="width:13.4px;font-size:17.8px;position:relative;top:1.5px">重</i><i class="k" style="width:13.4px;font-size:17.8px;position:relative;top:1.5px">载</i><i style="display:inline-block;width:4.5px"></i><i class="k" style="width:14px;font-size:17.8px;position:relative;top:1.5px">开</i></div>
<svg class="a" style="left:1412px;top:25px" width="9" height="7"><path d="M0.5 0.5 H8.5 L4.5 6.5 Z" fill="#bdbdbd"/></svg>
<svg class="a" style="left:1492px;top:19px" width="20" height="20" viewBox="0 0 20 20"><path d="M7.04 2.68 A7.9 7.9 0 0 1 17.32 12.96 M12.83 17.38 A7.9 7.9 0 0 1 2.68 7.04" fill="none" stroke="#a8a8a8" stroke-width="1.3"/><path d="M14.98 11.81 L19.87 13.59 L15.18 15.56 Z M5.02 8.19 L0.13 6.41 L4.82 4.44 Z" fill="#a8a8a8"/></svg>
<svg class="a" style="left:1542px;top:19px" width="20" height="20" viewBox="0 0 20 20"><circle cx="10" cy="10" r="8.2" fill="none" stroke="#a8a8a8" stroke-width="1.3"/><rect x="6.5" y="6.5" width="7" height="7" fill="#a8a8a8"/></svg>
<div class="a" style="left:1080px;top:8px;width:0;height:0"></div>
<svg class="a" style="left:1084px;top:19px" width="18" height="17"><rect x="1.5" y="1.5" width="15" height="14" rx="1" fill="none" stroke="#d0d0d0" stroke-width="1.6"/><path d="M9 1.5 V15.5" stroke="#d0d0d0" stroke-width="1.6"/></svg>
<svg class="a" style="left:1124px;top:24px" width="18" height="6"><circle cx="2.5" cy="3" r="1.6" fill="#d0d0d0"/><circle cx="9" cy="3" r="1.6" fill="#d0d0d0"/><circle cx="15.5" cy="3" r="1.6" fill="#d0d0d0"/></svg>
<!-- phone -->
<div class="a" style="left:1220px;top:84px;width:353px;height:626px;box-shadow:0 6px 18px 1px rgba(255,255,255,.1)"></div>
<div class="a" id="phone" style="left:1220px;top:84px;width:353px;height:626px;background:#fff;overflow:hidden">
<div class="a" style="left:0;top:0;width:353px;height:60px;background:#ff8080"></div>
<div class="a" style="left:0;top:18px;width:353px;height:1px;background:#ff9a9a"></div>
<svg class="a" style="left:10px;top:8px" width="33" height="7"><g fill="#fff"><circle cx="2.6" cy="3.5" r="2.6"/><circle cx="9.6" cy="3.5" r="2.6"/><circle cx="16.6" cy="3.5" r="2.6"/><circle cx="23.6" cy="3.5" r="2.6"/><circle cx="30.4" cy="3.5" r="2.6"/></g></svg>
<div class="a" style="left:45px;top:3px;font-size:11px;color:#fff;line-height:14px;letter-spacing:-0.3px">WeChat</div>
<svg class="a" style="left:84px;top:5px" width="11" height="10" viewBox="0 0 11 10"><path d="M0.8 3.5 A6.5 6.5 0 0 1 10.2 3.5 M2.5 5.2 A4.2 4.2 0 0 1 8.5 5.2 M4 6.8 A2 2 0 0 1 7 6.8" fill="none" stroke="#fff" stroke-width="1.2"/><circle cx="5.5" cy="8.6" r="1" fill="#fff"/></svg>
<div class="a" style="left:161px;top:3px;font-size:12px;color:#fff;line-height:14px">21:51</div>
<div class="a" style="left:292px;top:4px;font-size:10px;color:#fff;line-height:14px;letter-spacing:-0.3px">100%</div>
<svg class="a" style="left:321px;top:6px" width="26" height="10"><rect x="0.75" y="0.75" width="21.5" height="8.5" rx="1.5" fill="none" stroke="#fff" stroke-width="1.2"/><rect x="2.3" y="2.3" width="18.4" height="5.4" fill="#fff"/><rect x="23.3" y="3.3" width="1.6" height="3.4" fill="#fff"/></svg>
<svg class="a" style="left:9px;top:33px" width="12" height="17"><path d="M10 1.5 L2.5 8.5 L10 15.5" fill="none" stroke="#fff" stroke-width="1.6"/></svg>
<div class="a" style="left:151.5px;top:31px;font-size:13px;color:#fff;line-height:20px"><i class="k" style="width:12.25px;font-size:15.8px;position:relative;top:2px">弘</i><i class="k" style="width:12.25px;font-size:15.8px;position:relative;top:2px">源</i><i class="k" style="width:12.25px;font-size:15.8px;position:relative;top:2px">旅</i><i class="k" style="width:12.25px;font-size:15.8px;position:relative;top:2px">途</i></div>
<div class="a" style="left:264px;top:23px;width:81px;height:29px;border-radius:15px;background:#b85f64;border:1px solid rgba(255,255,255,.12)"></div>
<div class="a" style="left:304px;top:29px;width:1px;height:17px;background:rgba(255,255,255,.25)"></div>
<svg class="a" style="left:274px;top:34px" width="22" height="7"><g fill="#fff"><circle cx="3" cy="3.5" r="2.4"/><rect x="7.5" y="1" width="7" height="5" rx="2.2"/><circle cx="19" cy="3.5" r="2.4"/></g></svg>
<svg class="a" style="left:316px;top:30px" width="18" height="18"><circle cx="9" cy="9" r="7.2" fill="none" stroke="#fff" stroke-width="1.9"/><circle cx="9" cy="9" r="3.2" fill="#fff"/></svg>
<svg class="a" style="left:2.0px;top:69.0px" width="115.0" height="4"><line x1="0" y1="2" x2="115.0" y2="2" stroke="#111" stroke-width="1.6" stroke-dasharray="4.2 2.4"/></svg>
<div class="a pl" style="left:122px;top:60px">input<i class="k" style="width:15px;font-size:17.8px;position:relative;top:1px">组</i><i class="k" style="width:15px;font-size:17.8px;position:relative;top:1px">件</i></div>
<svg class="a" style="left:195.0px;top:69.0px" width="117.0" height="4"><line x1="0" y1="2" x2="117.0" y2="2" stroke="#111" stroke-width="1.6" stroke-dasharray="4.2 2.4"/></svg>
<div class="a" style="left:0.5px;top:79.5px;width:190.5px;height:30.5px;border:1.5px solid #ffc46b"></div>
<div class="a" style="left:2px;top:85.5px;font-size:16px;color:#4a4a4a;line-height:20px">Hello World!aaaaa</div>
<svg class="a" style="left:2.0px;top:118.0px" width="115.0" height="4"><line x1="0" y1="2" x2="115.0" y2="2" stroke="#111" stroke-width="1.6" stroke-dasharray="4.2 2.4"/></svg>
<div class="a pl" style="left:122px;top:109px">scroll-view<i class="k" style="width:15px;font-size:17.8px;position:relative;top:1px">组</i><i class="k" style="width:15px;font-size:17.8px;position:relative;top:1px">件</i></div>
<svg class="a" style="left:233.0px;top:118.0px" width="117.0" height="4"><line x1="0" y1="2" x2="117.0" y2="2" stroke="#111" stroke-width="1.6" stroke-dasharray="4.2 2.4"/></svg>
<svg class="a" style="left:2.0px;top:138.0px" width="63.0" height="4"><line x1="0" y1="2" x2="63.0" y2="2" stroke="#111" stroke-width="1.6" stroke-dasharray="4.2 2.4"/></svg>
<div class="a pl" style="left:70px;top:129px"><i class="k" style="width:15px;font-size:17.8px;position:relative;top:1px">上</i><i class="k" style="width:15px;font-size:17.8px;position:relative;top:1px">下</i><i class="k" style="width:15px;font-size:17.8px;position:relative;top:1px">滚</i><i class="k" style="width:15px;font-size:17.8px;position:relative;top:1px">动</i></div>
<svg class="a" style="left:135.0px;top:138.0px" width="85.0" height="4"><line x1="0" y1="2" x2="85.0" y2="2" stroke="#111" stroke-width="1.6" stroke-dasharray="4.2 2.4"/></svg>
<div class="a" style="left:0;top:148px;width:353px;height:141px;background:#ffa500"></div>
<div class="a" style="left:0;top:148px;width:94px;height:94px;background:#f00"></div>
<div class="a" style="left:0;top:242px;width:94px;height:47px;background:#00f"></div>
<div class="a pc" style="left:1px;top:150px">red</div><div class="a pc" style="left:1px;top:244px">blue</div>
<svg class="a" style="left:2.0px;top:298.0px" width="69.0" height="4"><line x1="0" y1="2" x2="69.0" y2="2" stroke="#111" stroke-width="1.6" stroke-dasharray="4.2 2.4"/></svg>
<div class="a pl" style="left:76px;top:289px"><i class="k" style="width:15px;font-size:17.8px;position:relative;top:1px">左</i><i class="k" style="width:15px;font-size:17.8px;position:relative;top:1px">右</i><i class="k" style="width:15px;font-size:17.8px;position:relative;top:1px">滚</i><i class="k" style="width:15px;font-size:17.8px;position:relative;top:1px">动</i></div>
<svg class="a" style="left:142.0px;top:298.0px" width="84.0" height="4"><line x1="0" y1="2" x2="84.0" y2="2" stroke="#111" stroke-width="1.6" stroke-dasharray="4.2 2.4"/></svg>
<div class="a" style="left:0;top:309px;width:353px;height:141px;background:#ffa500"></div>
<div class="a" style="left:0px;top:309px;width:94px;height:94px;background:#f00"></div><div class="a pc" style="left:1px;top:311px">red</div>
<div class="a" style="left:94px;top:309px;width:94px;height:94px;background:#00f"></div><div class="a pc" style="left:95px;top:311px">blue</div>
<div class="a" style="left:188px;top:309px;width:94px;height:94px;background:#008000"></div><div class="a pc" style="left:189px;top:311px">green</div>
<div class="a" style="left:282px;top:309px;width:94px;height:94px;background:#87ceeb"></div><div class="a pc" style="left:283px;top:311px">skyblue</div>
<div class="a" style="left:0;top:469px;width:353px;height:141px;background:#ffa500"></div>
<div class="a" style="left:0px;top:469px;width:94px;height:94px;background:#f00"></div><div class="a pc" style="left:1px;top:471px">red</div>
<div class="a" style="left:94px;top:469px;width:94px;height:94px;background:#00f"></div><div class="a pc" style="left:95px;top:471px">blue</div>
<div class="a" style="left:188px;top:469px;width:94px;height:94px;background:#008000"></div><div class="a pc" style="left:189px;top:471px">green</div>
<div class="a" style="left:282px;top:469px;width:94px;height:94px;background:#87ceeb"></div><div class="a pc" style="left:283px;top:471px">skyblue</div>
<svg class="a" style="left:2.0px;top:457.5px" width="69.0" height="4"><line x1="0" y1="2" x2="69.0" y2="2" stroke="#111" stroke-width="1.6" stroke-dasharray="4.2 2.4"/></svg>
<div class="a pl" style="left:76px;top:448.5px"><i class="k" style="width:15px;font-size:17.8px;position:relative;top:1px">监</i><i class="k" style="width:15px;font-size:17.8px;position:relative;top:1px">听</i><i class="k" style="width:15px;font-size:17.8px;position:relative;top:1px">滚</i><i class="k" style="width:15px;font-size:17.8px;position:relative;top:1px">动</i><i class="k" style="width:15px;font-size:17.8px;position:relative;top:1px">事</i><i class="k" style="width:15px;font-size:17.8px;position:relative;top:1px">件</i></div>
<svg class="a" style="left:171.0px;top:457.5px" width="85.0" height="4"><line x1="0" y1="2" x2="85.0" y2="2" stroke="#111" stroke-width="1.6" stroke-dasharray="4.2 2.4"/></svg>
<svg class="a" style="left:2.0px;top:619.5px" width="115.0" height="4"><line x1="0" y1="2" x2="115.0" y2="2" stroke="#111" stroke-width="1.6" stroke-dasharray="4.2 2.4"/></svg>
<div class="a pl" style="left:122px;top:610.5px">Image<i class="k" style="width:15px;font-size:17.8px;position:relative;top:1px">组</i><i class="k" style="width:15px;font-size:17.8px;position:relative;top:1px">件</i></div>
<svg class="a" style="left:201.0px;top:619.5px" width="117.0" height="4"><line x1="0" y1="2" x2="117.0" y2="2" stroke="#111" stroke-width="1.6" stroke-dasharray="4.2 2.4"/></svg>
</div>

<!-- breadcrumb icons -->
<svg class="a" style="left:4px;top:51px" width="21" height="16"><g fill="#a0a0a0"><rect x="0.5" y="1.5" width="2" height="2"/><rect x="0.5" y="5.3" width="2" height="2"/><rect x="0.5" y="9.1" width="2" height="2"/><rect x="0.5" y="12.9" width="2" height="2"/><rect x="5" y="1.6" width="14.5" height="1.6"/><rect x="5" y="5.4" width="14.5" height="1.6"/><rect x="5" y="9.2" width="14.5" height="1.6"/><rect x="5" y="13" width="14.5" height="1.6"/></g></svg>
<svg class="a" style="left:44px;top:49px" width="16" height="20"><path d="M2 1.5 H13.5 V17.5 L7.75 12 L2 17.5 Z" fill="none" stroke="#a0a0a0" stroke-width="1.6" stroke-linejoin="miter"/></svg>
<svg class="a" style="left:80px;top:52px" width="19" height="15"><path d="M18 7.5 H2 M8 1.5 L2 7.5 L8 13.5" fill="none" stroke="#a8a8a8" stroke-width="1.4"/></svg>
<svg class="a" style="left:116px;top:52px" width="19" height="15"><path d="M1 7.5 H17 M11 1.5 L17 7.5 L11 13.5" fill="none" stroke="#5e5e5e" stroke-width="1.4"/></svg>
<svg class="a" style="left:203px;top:53px" width="8" height="13"><path d="M1 1 L6.5 6.5 L1 12" fill="none" stroke="#8e8e8e" stroke-width="1.2"/></svg>
<svg class="a" style="left:351px;top:53px" width="8" height="13"><path d="M1 1 L6.5 6.5 L1 12" fill="none" stroke="#8e8e8e" stroke-width="1.2"/></svg>
<svg class="a" style="left:452px;top:53px" width="8" height="13"><path d="M1 1 L6.5 6.5 L1 12" fill="none" stroke="#8e8e8e" stroke-width="1.2"/></svg>
<svg class="a" style="left:530px;top:53px" width="8" height="13"><path d="M1 1 L6.5 6.5 L1 12" fill="none" stroke="#8e8e8e" stroke-width="1.2"/></svg>
<svg class="a" style="left:465px;top:50px" width="19" height="19" viewBox="0 0 19 19"><path d="M12.5 1.5 A4.8 4.8 0 0 0 8 7.8 L2 13.8 A1.9 1.9 0 0 0 4.9 16.7 L10.9 10.7 A4.8 4.8 0 0 0 17.3 6.2 L14.4 8.2 L11.7 7.1 L10.6 4.4 Z" fill="none" stroke="#a0a0a0" stroke-width="1.5" stroke-linejoin="round"/></svg>
<svg class="a" style="left:544px;top:50px" width="19" height="19" viewBox="0 0 19 19"><path d="M12.5 1.5 A4.8 4.8 0 0 0 8 7.8 L2 13.8 A1.9 1.9 0 0 0 4.9 16.7 L10.9 10.7 A4.8 4.8 0 0 0 17.3 6.2 L14.4 8.2 L11.7 7.1 L10.6 4.4 Z" fill="none" stroke="#a0a0a0" stroke-width="1.5" stroke-linejoin="round"/></svg>

<!-- tab icons -->
<svg class="a" style="left:674px;top:8px" width="0" height="0"></svg>
<svg class="a" style="left:544px;top:18.5px" width="15" height="17" viewBox="0 0 15 17"><path d="M0.3 1.8 Q0.3 0.2 1.8 0.2 H9 L14 5.2 V15 Q14 16.5 12.5 16.5 H1.8 Q0.3 16.5 0.3 15 Z" fill="#8bc34a"/><path d="M8 2.2 V6 H11.7 Z" fill="#2d2d38"/><path d="M5.6 8.6 L3 11.2 L5.6 13.8 M8.4 8.6 L11 11.2 L8.4 13.8" fill="none" stroke="#2d2d38" stroke-width="1.7"/></svg>
<svg class="a" style="left:923px;top:20px" width="14" height="14"><path d="M1.5 1.5 L12.5 12.5 M12.5 1.5 L1.5 12.5" fill="none" stroke="#e8e8e8" stroke-width="1.5"/></svg>
<!-- arrows -->
<svg class="a" style="left:0;top:0" width="1591" height="813" viewBox="0 0 1591 813">
<g fill="#b97650" stroke="#b97650">
<path d="M824.5 663 L672 686.5" stroke-width="6.5" stroke-linecap="round" fill="none"/>
<path d="M651 692 L673 678 L670.5 688.5 L676 698.5 Z" stroke-width="1" stroke-linejoin="round"/>
<path d="M1532.5 166 L1391 178.6" stroke-width="6.5" stroke-linecap="round" fill="none"/>
<path d="M1369.5 181 L1391.5 169 L1389 179 L1393.5 189 Z" stroke-width="1" stroke-linejoin="round"/>
</g></svg>
</body></html>
